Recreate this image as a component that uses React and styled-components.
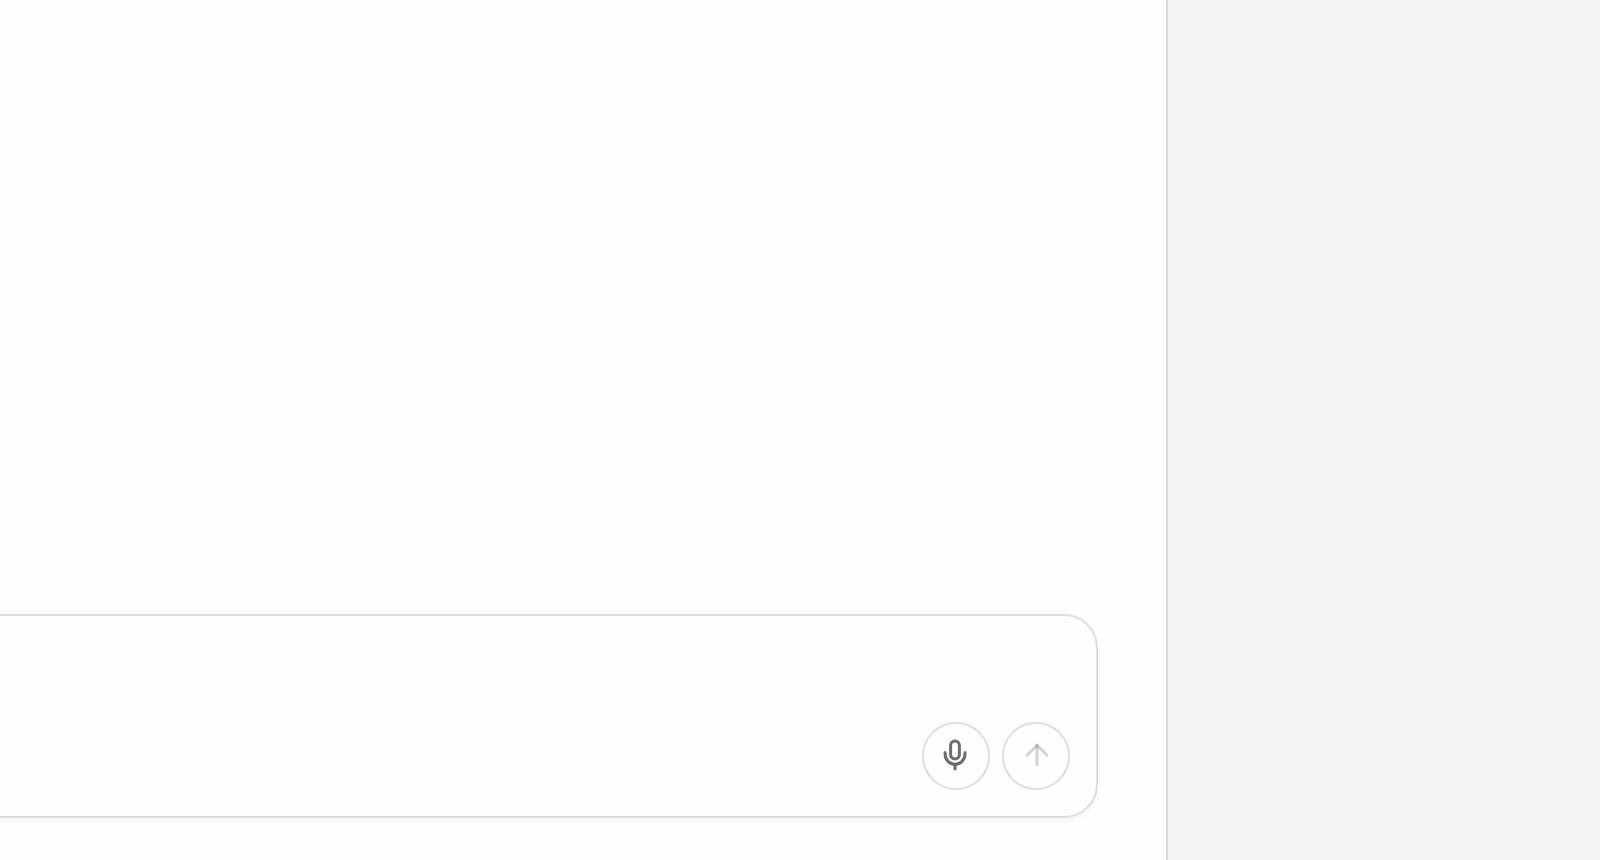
import React, { useState } from "react"
import styled, { createGlobalStyle } from "styled-components"

const MicIcon = () => (
  <Icon viewBox="0 0 36 36" aria-hidden="true">
    <rect x="12.6" y="3" width="8.8" height="18" rx="4.4" />
    <path d="M7.1 14.4v1.9a9.95 9.95 0 0 0 19.9 0v-1.9" />
    <path d="M17 26.6v4.3" />
  </Icon>
)

const ArrowIcon = () => (
  <Icon viewBox="0 0 36 36" aria-hidden="true">
    <path d="M9 17.2L19 7.2L29 17.2" />
    <path d="M19 7.2v19.6" />
  </Icon>
)

const App = () => {
  const [message, setMessage] = useState("")

  return (
    <>
      <GlobalStyle />
      <Page>
        <Chat>
          <Composer onSubmit={e => e.preventDefault()}>
            <MessageInput
              aria-label="Message"
              value={message}
              onChange={e => setMessage(e.target.value)}
            />
            <Actions>
              <RoundButton type="button" aria-label="Dictate" $color="#6b6b70">
                <MicIcon />
              </RoundButton>
              <RoundButton
                type="submit"
                aria-label="Send"
                $color="rgba(40, 40, 45, 0.2)"
                disabled={!message}
              >
                <ArrowIcon />
              </RoundButton>
            </Actions>
          </Composer>
        </Chat>
        <SidePanel />
      </Page>
    </>
  )
}

export default App

const GlobalStyle = createGlobalStyle`
  * {
    box-sizing: border-box;
  }
  body {
    margin: 0;
    background: #fefefe;
    font-family: Inter, sans-serif;
  }
`
const Page = styled.div`
  display: grid;
  grid-template-columns: minmax(0, 1fr) 434px;
  min-height: 100vh;
`
const Chat = styled.main`
  display: flex;
  flex-direction: column;
  justify-content: flex-end;
  padding: 0 68px 42px 0;
  overflow: hidden;
`
const SidePanel = styled.aside`
  border-left: 2px solid #dcdcde;
  background: #f3f3f6;
`
// Runs past the left edge of the window
const Composer = styled.form`
  display: flex;
  flex-direction: column;
  gap: 12px;
  margin-left: -40px;
  padding: 26px 26px 26px 66px;
  border: 2px solid #dedede;
  border-radius: 34px;
  background: #fefefe;
  box-shadow: 0 3px 6px rgba(0, 0, 0, 0.04);
`
const MessageInput = styled.textarea`
  width: 100%;
  height: 68px;
  padding: 0;
  border: none;
  outline: none;
  resize: none;
  background: transparent;
  color: #2b2b2e;
  font-family: inherit;
  font-size: 28px;
  line-height: 40px;
`
const Actions = styled.div`
  display: flex;
  justify-content: flex-end;
  gap: 12px;
`
const RoundButton = styled.button`
  display: flex;
  justify-content: center;
  align-items: center;
  width: 68px;
  height: 68px;
  padding: 0;
  border: 2px solid #dedede;
  border-radius: 50%;
  background: #fefefe;
  color: ${({ $color }) => $color};
`
const Icon = styled.svg`
  width: 36px;
  height: 36px;
  fill: none;
  stroke: currentColor;
  stroke-width: 3;
  stroke-linecap: round;
  stroke-linejoin: round;
`
